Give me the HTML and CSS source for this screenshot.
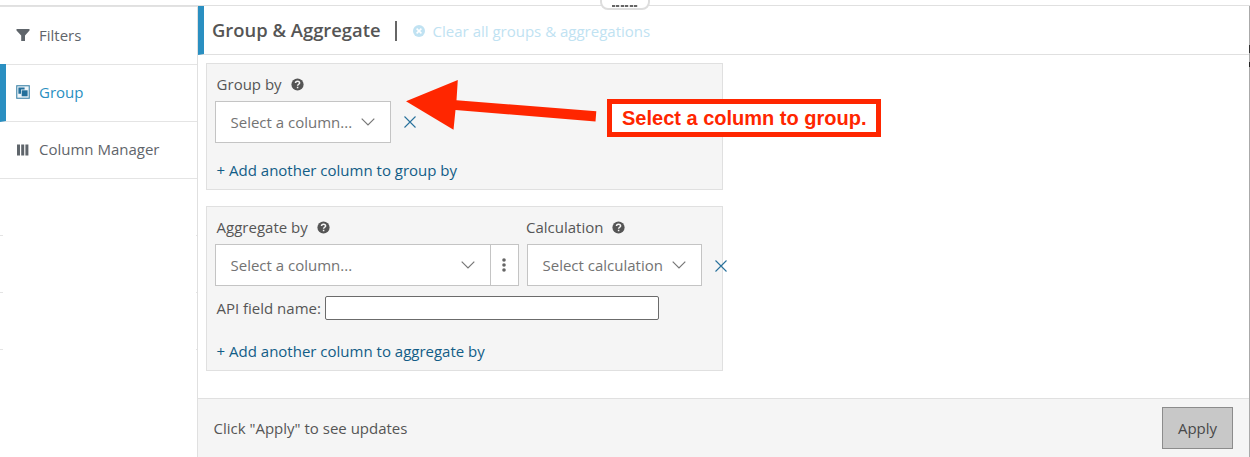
FILE: index.html
```html
<!DOCTYPE html>
<html lang="en">
<head>
    <meta charset="UTF-8">
    <title>Group &amp; Aggregate</title>
    <link rel="stylesheet" href="styles.css">
</head>
<body>
    <div class="app">
        <div class="topbar"></div>
        <div class="drag-handle"><span class="dots"></span></div>

        <div class="layout">
            <nav class="sidebar">
                <a class="tab">
                    <svg width="14" height="14" viewBox="0 0 14 14"><path d="M0.5 1h13v1.6L9 7.6V13H5.2V7.6L0.5 2.6z" fill="#5f656b"/></svg>
                    <span>Filters</span>
                </a>
                <a class="tab active">
                    <svg width="14" height="14" viewBox="0 0 14 14">
                        <rect x="0.75" y="0.75" width="12.5" height="12.5" fill="#eef5f9" stroke="#3f84a9" stroke-width="1.1"/>
                        <path d="M2.4 2.5h6.2v2H5v4.2H2.4z" fill="#236f9b"/>
                        <rect x="5.7" y="5.3" width="5.9" height="6" fill="#236f9b"/>
                    </svg>
                    <span>Group</span>
                </a>
                <a class="tab">
                    <svg width="14" height="14" viewBox="0 0 14 14" fill="#5f656b"><path d="M1 1.5h3v11H1zM5.2 1.5h3v11h-3zM9.4 1.5h3v11h-3z"/></svg>
                    <span>Column Manager</span>
                </a>
                <div class="empty-tab"></div>
                <div class="empty-tab"></div>
                <div class="empty-tab"></div>
            </nav>

            <main class="main">
                <header class="header">
                    <h1>Group &amp; Aggregate</h1>
                    <span class="divider"></span>
                    <a class="clear">
                        <svg width="12" height="12" viewBox="0 0 12 12"><circle cx="6" cy="6" r="6" fill="#c0e2f2"/><path d="M3.6 3.6l4.8 4.8M8.4 3.6L3.6 8.4" stroke="#fff" stroke-width="1.5"/></svg>
                        <span>Clear all groups &amp; aggregations</span>
                    </a>
                </header>

                <div class="content">
                    <section class="panel group-panel">
                        <div class="label">
                            <span>Group by</span>
                            <svg class="help" width="13" height="13" viewBox="0 0 13 13"><circle cx="6.5" cy="6.5" r="6.1" fill="#555"/><path d="M4.5 5C4.5 2.5 8.6 2.6 8.6 4.9C8.6 6.3 6.6 6.2 6.6 7.8M6.6 8.8v1.5" fill="none" stroke="#f5f5f5" stroke-width="1.5"/></svg>
                        </div>
                        <div class="row">
                            <div class="select group-select">
                                <span>Select a column...</span>
                                <svg width="14" height="8" viewBox="0 0 14 8"><path d="M0.7 0.7L7 7l6.3-6.3" fill="none" stroke="#777" stroke-width="1.2"/></svg>
                            </div>
                            <svg class="remove" width="12" height="12" viewBox="0 0 12 12"><path d="M0.5 0.5l11 11M11.5 0.5l-11 11" stroke="#28719c" stroke-width="1.1"/></svg>
                        </div>
                        <a class="add">+ Add another column to group by</a>
                    </section>

                    <section class="panel aggregate-panel">
                        <div class="row">
                            <div class="field">
                                <div class="label">
                                    <span>Aggregate by</span>
                                    <svg class="help" width="13" height="13" viewBox="0 0 13 13"><circle cx="6.5" cy="6.5" r="6.1" fill="#555"/><path d="M4.5 5C4.5 2.5 8.6 2.6 8.6 4.9C8.6 6.3 6.6 6.2 6.6 7.8M6.6 8.8v1.5" fill="none" stroke="#f5f5f5" stroke-width="1.5"/></svg>
                                </div>
                                <div class="select-group">
                                    <div class="select column-select">
                                        <span>Select a column...</span>
                                        <svg width="14" height="8" viewBox="0 0 14 8"><path d="M0.7 0.7L7 7l6.3-6.3" fill="none" stroke="#777" stroke-width="1.2"/></svg>
                                    </div>
                                    <div class="more">
                                        <svg width="4" height="14" viewBox="0 0 4 14" fill="#666"><circle cx="2" cy="2" r="1.8"/><circle cx="2" cy="7" r="1.8"/><circle cx="2" cy="12" r="1.8"/></svg>
                                    </div>
                                </div>
                            </div>
                            <div class="field calculation">
                                <div class="label">
                                    <span>Calculation</span>
                                    <svg class="help" width="13" height="13" viewBox="0 0 13 13"><circle cx="6.5" cy="6.5" r="6.1" fill="#555"/><path d="M4.5 5C4.5 2.5 8.6 2.6 8.6 4.9C8.6 6.3 6.6 6.2 6.6 7.8M6.6 8.8v1.5" fill="none" stroke="#f5f5f5" stroke-width="1.5"/></svg>
                                </div>
                                <div class="select calc-select">
                                    <span>Select calculation</span>
                                    <svg width="14" height="8" viewBox="0 0 14 8"><path d="M0.7 0.7L7 7l6.3-6.3" fill="none" stroke="#777" stroke-width="1.2"/></svg>
                                </div>
                            </div>
                            <svg class="remove remove-low" width="12" height="12" viewBox="0 0 12 12"><path d="M0.5 0.5l11 11M11.5 0.5l-11 11" stroke="#28719c" stroke-width="1.1"/></svg>
                        </div>
                        <div class="api">
                            <label for="apiField">API field name:</label>
                            <input type="text" id="apiField">
                        </div>
                        <a class="add">+ Add another column to aggregate by</a>
                    </section>
                </div>

                <footer class="footer">
                    <span>Click "Apply" to see updates</span>
                    <button type="button">Apply</button>
                </footer>
            </main>
            <div class="edge"></div>
        </div>

        <!-- Annotation over the page -->
        <svg class="arrow" width="192" height="52" viewBox="0 0 192 52"><path d="M0 21.2L51.8 0L50.5 20.2L190.3 31.3L189.5 41.5L49.5 30L47.5 49.7z" fill="#ff2600"/></svg>
        <div class="callout">Select a column to group.</div>
    </div>
</body>
</html>
```

FILE: styles.css
```css
* {
    box-sizing: border-box;
}

body {
    margin: 0;
    font-family: "Open Sans", sans-serif;
    font-size: 15px;
    line-height: 20px;
    color: #555;
    background-color: #fff;
    overflow: hidden;
}

svg {
    display: block;
    flex: none;
}

span, a, label {
    white-space: nowrap;
}

.app {
    position: relative;
    display: flex;
    flex-direction: column;
    height: 457px;
}

.topbar {
    height: 6px;
    border-bottom: 1px solid #e0e0e0;
}

.drag-handle {
    position: absolute;
    top: -8px;
    left: 600px;
    width: 50px;
    height: 18px;
    border: 2px solid #ddd;
    border-radius: 8px;
    background-color: #fff;
}

.dots {
    display: block;
    width: 26px;
    height: 2px;
    margin: 11px auto 0;
    background: repeating-linear-gradient(to right, #666 0, #666 3px, #ddd 3px, #ddd 4.5px);
}

.layout {
    flex: 1;
    display: flex;
}

.sidebar {
    width: 198px;
    border-top: 1px solid #e2e2e2;
    border-right: 1px solid #e0e0e0;
}

.tab {
    display: flex;
    align-items: center;
    gap: 9px;
    height: 57px;
    padding: 0 0 1px 16px;
    border-bottom: 1px solid #e4e4e4;
    color: #5f656b;
}

.tab span {
    margin-top: -1px;
}

.tab:first-child {
    height: 58px;
}

.tab.active {
    height: 58px;
    margin-top: -1px;
    padding-left: 10px;
    border-left: 6px solid #2a8fc1;
    color: #2a8fc1;
}

/* only the ends of the row lines are visible */
.empty-tab {
    height: 57px;
    border-bottom: 1px solid;
    border-image: linear-gradient(to right, #e4e4e4 4px, transparent 4px, transparent 195px, #e4e4e4 195px) 1;
    border-width: 0 0 1px;
}

.main {
    flex: 1;
    display: flex;
    flex-direction: column;
}

.header {
    display: flex;
    align-items: center;
    height: 49px;
    padding-left: 8px;
    border-left: 6px solid #2a8fc1;
    border-bottom: 1px solid #e0e0e0;
}

h1 {
    margin: 0;
    font-size: 18.4px;
    font-weight: 600;
    white-space: nowrap;
}

.divider {
    width: 2px;
    height: 20px;
    margin: 2px 16px 0 14.5px;
    background-color: #666;
}

.clear {
    display: flex;
    align-items: center;
    gap: 7.5px;
    padding-top: 2px;
    color: #c0e2f2;
}

.content {
    flex: 1;
    padding: 8px;
}

.panel {
    width: 517px;
    padding: 10px 0 0 8px;
    border: 1px solid #e0e0e0;
    background-color: #f5f5f5;
}

.group-panel {
    height: 127px;
}

.aggregate-panel {
    height: 165px;
    margin-top: 16px;
}

.label {
    display: flex;
    align-items: center;
    gap: 9px;
    height: 20px;
    margin: 0 0 7px 1.6px;
}

.help {
    margin-top: 1px;
}

.row {
    display: flex;
    align-items: center;
}

.select {
    display: flex;
    align-items: center;
    justify-content: space-between;
    height: 42px;
    padding: 0 15px 0 14.5px;
    border: 1px solid #c4c4c4;
    background-color: #fff;
    color: #737373;
}

.group-select {
    width: 176px;
}

.column-select {
    width: 276px;
}

.calc-select {
    width: 175px;
}

.calculation {
    margin-left: 8px;
}

.calculation .label {
    margin-left: -1px;
}

.select-group {
    display: flex;
}

.more {
    display: flex;
    align-items: center;
    justify-content: center;
    width: 28px;
    height: 42px;
    padding-right: 1px;
    border: 1px solid #c4c4c4;
    border-left: none;
    background-color: #fff;
}

.remove {
    margin-left: 13px;
}

.remove-low {
    margin-top: 28px;
}

.add {
    display: block;
    margin: 17px 0 0 1.6px;
    color: #125d87;
}

.api {
    display: flex;
    align-items: center;
    gap: 4.4px;
    height: 24px;
    margin: 10px 0 0 1.4px;
}

.api input {
    width: 334px;
    height: 24px;
    border: 1px solid #6b6b6b;
    border-radius: 2px;
    background-color: #fff;
}

.api + .add {
    margin-top: 21px;
}

.footer {
    display: flex;
    align-items: center;
    justify-content: space-between;
    height: 59px;
    padding: 0 16px 0 15.5px;
    border-top: 1px solid #e0e0e0;
    background-color: #f5f5f5;
}

.footer button {
    width: 71px;
    height: 42px;
    padding: 0;
    border: 1px solid #8c8c8c;
    background-color: #c8c8c8;
    font: inherit;
    color: #484848;
}

.edge {
    width: 1px;
    background: linear-gradient(#aaa 39px, #333 39px, #333 47px, #aaa 47px, #aaa 56px, #222 56px, #222 61px, #aaa 61px);
}

.arrow {
    position: absolute;
    top: 80px;
    left: 406px;
}

.callout {
    position: absolute;
    top: 99px;
    left: 607px;
    width: 274px;
    height: 38px;
    padding-left: 10px;
    border: 5px solid #ff2600;
    background-color: #fff;
    color: #ff2600;
    font-family: "Liberation Sans", Arial, sans-serif;
    font-size: 20px;
    font-weight: bold;
    line-height: 28px;
    white-space: nowrap;
}
```
